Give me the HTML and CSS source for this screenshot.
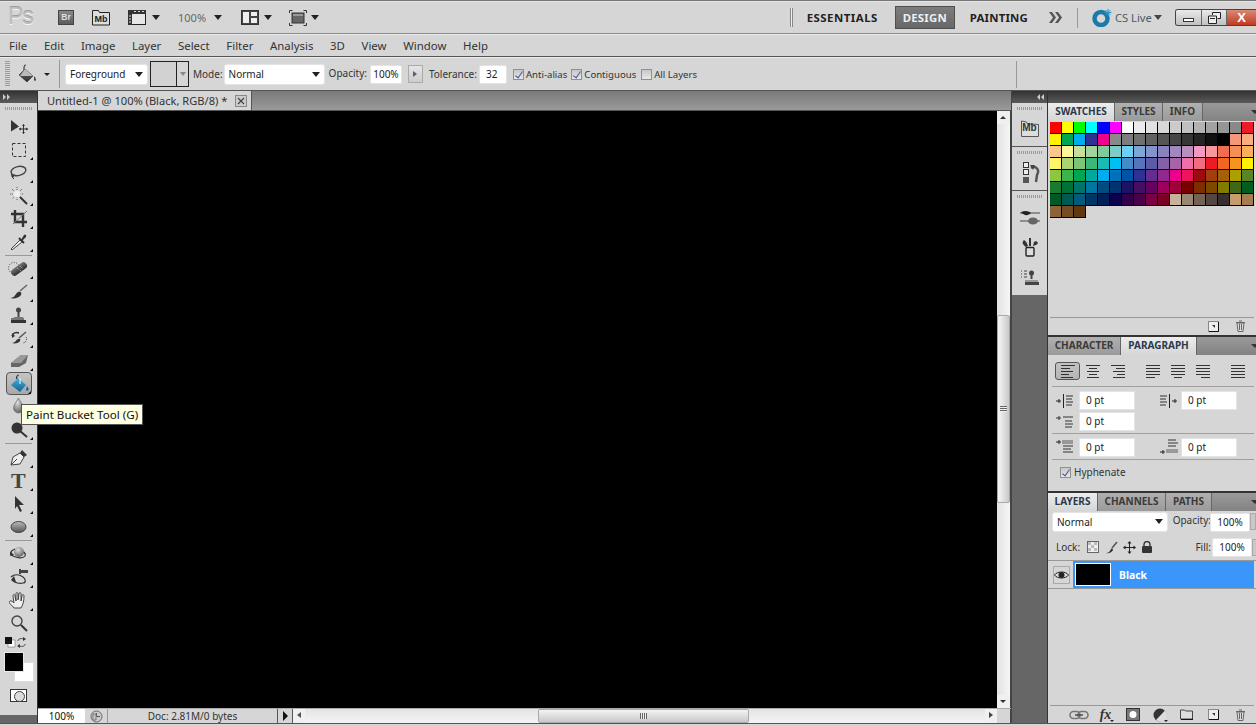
FILE: index.html
```html
<!DOCTYPE html>
<html lang="en">
<head>
<meta charset="utf-8">
<title>Photoshop CS5</title>
<link rel="stylesheet" href="styles.css">
</head>
<body>
<svg class="defs" width="0" height="0" aria-hidden="true">
  <defs>
    <linearGradient id="gm" x1="0" y1="0" x2="0" y2="1"><stop offset="0" stop-color="#777"/><stop offset="1" stop-color="#2c2c2c"/></linearGradient>
    <linearGradient id="gl" x1="0" y1="0" x2="0" y2="1"><stop offset="0" stop-color="#bbb"/><stop offset="1" stop-color="#555"/></linearGradient>
    <linearGradient id="gb" x1="0" y1="0" x2="0" y2="1"><stop offset="0" stop-color="#4ab0dd"/><stop offset="1" stop-color="#14608c"/></linearGradient>
    <radialGradient id="gs" cx=".4" cy=".3" r=".8"><stop offset="0" stop-color="#ddd"/><stop offset="1" stop-color="#555"/></radialGradient>
  </defs>
</svg>
<div class="app">
  <header class="appbar">
    <span class="ps-logo">Ps</span>
    <span class="br-box">Br</span>
    <span class="mb-box"><svg width="18" height="17" viewBox="0 0 18 17"><path d="M.5 16V1.500h6l1 2h10V16z" fill="#ddd" stroke="#222"/></svg><b>Mb</b></span>
    <svg class="ab-film" width="18" height="17" viewBox="0 0 18 17"><rect x=".5" y="1.500" width="17" height="14" fill="#e6e6e6" stroke="#222"/><rect x="0" y="1" width="18" height="4" fill="#333"/><rect x="0" y="5" width="4" height="11" fill="#333"/><path d="M1 7h2M1 10h2M1 13h2M6 2.500h2M10 2.500h2M14 2.500h2" stroke="#ddd"/></svg>
    <i class="tri ab-t1"></i>
    <span class="ab-zoom">100%</span>
    <i class="tri ab-t2"></i>
    <svg class="ab-arr" width="18" height="15" viewBox="0 0 18 15"><rect x=".5" y=".5" width="17" height="14" fill="#444" stroke="#333"/><rect x="2" y="2" width="6" height="11" fill="#eee"/><rect x="10" y="2" width="6" height="4" fill="#eee"/><rect x="10" y="8" width="6" height="5" fill="#eee"/></svg>
    <i class="tri ab-t3"></i>
    <svg class="ab-scr" width="18" height="16" viewBox="0 0 18 16"><path d="M.5 3V.500h3M14.500 .500h3V3M.5 13v2.500h3M14.500 15.500h3V13" fill="none" stroke="#333"/><rect x="3" y="3" width="12" height="10" fill="#666" stroke="#333"/><rect x="4" y="4" width="10" height="2" fill="#999"/></svg>
    <i class="tri ab-t4"></i>
    <span class="ab-spacer"></span>
    <span class="ab-dbl"></span>
    <span class="ws ws-e">ESSENTIALS</span>
    <span class="ws ws-on">DESIGN</span>
    <span class="ws ws-p">PAINTING</span>
    <svg class="ab-more" width="15" height="11" viewBox="0 0 15 11"><path d="M1 0h3l4 5.500-4 5.500H1l4-5.500zM7 0h3l4 5.500-4 5.500H7l4-5.500z" fill="#555"/></svg>
    <span class="ab-sep"></span>
    <svg class="ab-cs" width="20" height="19" viewBox="0 0 20 19"><circle cx="9" cy="10.500" r="6.500" fill="none" stroke="#1c7aa8" stroke-width="4.500"/><path d="M16 1v7M12.500 4.500h7M13.500 2l5 5M18.500 2l-5 5" stroke="#2a95c4" stroke-width="1"/></svg>
    <span class="cs-text">CS Live</span>
    <i class="tri tri-g cs-t"></i>
    <div class="winctl">
      <span class="wc wc-min"><i></i></span>
      <span class="wc wc-res"><svg width="13" height="12" viewBox="0 0 13 12"><path d="M4.500 3V.500h8v6H9.500M.5 4h8v7.500h-8z" fill="#eee" stroke="#222"/><path d="M2 6.500h5" stroke="#222"/></svg></span>
      <span class="wc wc-close">X</span>
    </div>
  </header>

  <nav class="menubar">
    <span>File</span><span>Edit</span><span>Image</span><span>Layer</span><span>Select</span><span>Filter</span><span>Analysis</span><span>3D</span><span>View</span><span>Window</span><span>Help</span>
  </nav>

  <div class="options">
    <span class="grip-v"></span>
    <svg class="op-bucket" width="20" height="20" viewBox="0 0 20 20"><path d="M9 1c-1.500 0-2 1.500-2 3v3" fill="none" stroke="#444" stroke-width="1.200"/><path d="M8 5l8 7-6 6-8-7z" fill="url(#gm)" stroke="#333" stroke-width=".6"/><path d="M8 5l8 7H3z" fill="#bbb"/><path d="M17 12c1.500 2 2 3 2 4s-2 1-2 0z" fill="#444"/></svg>
    <i class="tri op-t"></i>
    <span class="op-sep"></span>
    <span class="sel sel-fg">Foreground<i class="tri"></i></span>
    <span class="pattern"><span class="pat-swatch"></span><span class="pat-arrow"><i class="tri tri-s"></i></span></span>
    <label class="lbl lbl-mode">Mode:</label>
    <span class="sel sel-mode">Normal<i class="tri"></i></span>
    <label class="lbl lbl-op">Opacity:</label>
    <span class="field f-op">100%</span>
    <span class="stepper"><i class="tri-r"></i></span>
    <label class="lbl lbl-tol">Tolerance:</label>
    <span class="field f-tol">32</span>
    <span class="chk c-aa on"></span><span class="lbl lbl-c">Anti-alias</span>
    <span class="chk c-co on"></span><span class="lbl lbl-c">Contiguous</span>
    <span class="chk c-al"></span><span class="lbl lbl-c">All Layers</span>
    <span class="op-sep2"></span>
  </div>

  <main class="workspace">
    <aside class="tools">
      <div class="strip"><svg width="8" height="6" viewBox="0 0 8 6"><path d="M0 0l3 3-3 3zM4 0l3 3-3 3z" fill="#ccc"/></svg></div>
      <div class="grip-h tools-grip"></div>
      <div class="tgroup">
        <div class="tool"><svg width="24" height="20" viewBox="0 0 24 20"><path d="M4 3l8 6.500-8 5z" fill="#333"/><path d="M16.500 7.500v9M12 12h9" stroke="#333"/><path d="M16.500 7l-1.500 2h3zM16.500 17l-1.500-2h3zM12 12l2-1.500v3zM21 12l-2-1.500v3z" fill="#333"/></svg></div>
        <div class="tool corner"><svg width="24" height="20" viewBox="0 0 24 20"><rect x="5.500" y="3.500" width="13" height="13" fill="none" stroke="#333" stroke-dasharray="3 2"/></svg></div>
        <div class="tool corner"><svg width="24" height="20" viewBox="0 0 24 20"><ellipse cx="11.500" cy="8" rx="7.500" ry="4.500" transform="rotate(-12 11.500 8)" fill="none" stroke="#444" stroke-width="1.400"/><path d="M5 11c-1 2 0 3 1 3s1-2 0-2-1 3 1 4" fill="none" stroke="#333"/></svg></div>
        <div class="tool corner"><svg width="24" height="20" viewBox="0 0 24 20"><path d="M10 1v14M3 8h14M5 3l10 10M15 3L5 13" stroke="#555" stroke-dasharray="1 1"/><circle cx="10" cy="8" r="3.500" fill="#eee"/><path d="M13 11l7 7" stroke="#333" stroke-width="2"/></svg></div>
        <div class="tool corner"><svg width="24" height="20" viewBox="0 0 24 20"><path d="M8 1v12h12M4 5h12v13" fill="none" stroke="#333" stroke-width="2.400"/><path d="M6 15L20 2" stroke="#777"/></svg></div>
        <div class="tool corner"><svg width="24" height="20" viewBox="0 0 24 20"><path d="M5 18l-1-1 9-9 2 2z" fill="#eee" stroke="#444"/><path d="M12 6l5 5" stroke="#333" stroke-width="2"/><path d="M14 8l3-5c1-1.500 3 .5 2 2l-4 4z" fill="#333"/></svg></div>
      </div>
      <div class="tsep"></div>
      <div class="tgroup">
        <div class="tool corner"><svg width="24" height="20" viewBox="0 0 24 20"><circle cx="7" cy="9" r="5.500" fill="none" stroke="#444" stroke-dasharray="1 1.500"/><rect x="3" y="6.500" width="18" height="7" rx="3.500" transform="rotate(-36 12 10)" fill="url(#gm)"/><path d="M10 9l4 3M13 7l3 3" stroke="#bbb" stroke-dasharray="1 1"/></svg></div>
        <div class="tool corner"><svg width="24" height="20" viewBox="0 0 24 20"><path d="M3 16c5 0 5-4 8-6 3-1 4 1 3 3-2 3-7 4-11 3z" fill="#333"/><path d="M13 9l7-6" stroke="#666" stroke-width="1.500"/></svg></div>
        <div class="tool corner"><svg width="24" height="20" viewBox="0 0 24 20"><circle cx="11.500" cy="5" r="2.500" fill="#444"/><rect x="10.500" y="6" width="2" height="6" fill="#444"/><path d="M6 13l2-1h7l2 1v2H4v-2z" fill="#777"/><rect x="4" y="15" width="15" height="3" fill="#333"/></svg></div>
        <div class="tool corner"><svg width="24" height="20" viewBox="0 0 24 20"><path d="M5 15c3 0 4-3 6-4 2-1 3 1 2 2-1 2-5 3-8 2z" fill="#333"/><path d="M12 10l7-6" stroke="#555" stroke-width="1.500"/><path d="M5 8c1-3 4-4 7-3" fill="none" stroke="#333" stroke-width="1.500"/><path d="M5 5v5l3-2z" fill="#333"/><path d="M19 9a4 4 0 0 1-3 6" fill="none" stroke="#333" stroke-dasharray="1 1"/></svg></div>
        <div class="tool corner"><svg width="24" height="20" viewBox="0 0 24 20"><path d="M4 12L14 4h7l-2 8-7 4H4z" fill="#666"/><path d="M4 12h10l7-8H14z" fill="#999"/></svg></div>
        <div class="tool tool-on corner"><svg width="24" height="20" viewBox="0 0 24 20"><path d="M11 1c-2 0-2.500 2-2.500 4" fill="none" stroke="#333" stroke-width="1.200"/><path d="M10 4l8 7-6 7-9-7z" fill="url(#gb)"/><path d="M12 4v6" stroke="#fff"/><path d="M19 12c1 2 2 3 1.500 4s-2.500 1-2.500 0z" fill="#14608c"/></svg></div>
        <div class="tool"><svg width="24" height="20" viewBox="0 0 24 20"><path d="M11.500 1c2 4 5 7 5 10a5 5 0 0 1-10 0c0-3 3-6 5-10z" fill="url(#gs)" stroke="#666" stroke-width=".6"/></svg></div>
        <div class="tool corner"><svg width="24" height="20" viewBox="0 0 24 20"><circle cx="10" cy="8" r="5.500" fill="#333"/><path d="M13 11l7 6" stroke="#333" stroke-width="2"/></svg></div>
      </div>
      <div class="tsep tsep-b"></div>
      <div class="tgroup">
        <div class="tool corner"><svg width="24" height="20" viewBox="0 0 24 20"><path d="M4 17l2-8 7-4 4 4-4 7z" fill="#eee" stroke="#444"/><path d="M4 17l6-6" stroke="#444"/><path d="M13 5l2-3 5 5-3 2z" fill="#333"/></svg></div>
        <div class="tool corner"><span class="t-glyph">T</span></div>
        <div class="tool corner"><svg width="24" height="20" viewBox="0 0 24 20"><path d="M8 2l9 9h-5l3 6-2 1-3-6-2 3z" fill="#333"/></svg></div>
        <div class="tool corner"><svg width="24" height="20" viewBox="0 0 24 20"><ellipse cx="11.500" cy="10" rx="7.500" ry="5.500" fill="url(#gl)" stroke="#444"/></svg></div>
      </div>
      <div class="tsep tsep-b"></div>
      <div class="tgroup">
        <div class="tool corner"><svg width="24" height="20" viewBox="0 0 24 20"><circle cx="12" cy="7" r="5" fill="url(#gs)"/><path d="M8 4c-5 2-6 5-2 7 4 2 10 3 12 0 1-2 0-3-1-4" fill="none" stroke="#333" stroke-width="1.200"/><path d="M4 7l-1 4 4-1z" fill="#333"/></svg></div>
        <div class="tool corner"><svg width="24" height="20" viewBox="0 0 24 20"><path d="M4 9c3-3 8-3 12 0 3 2 3 6 0 6-3 1-8 0-11-3" fill="none" stroke="#333" stroke-width="1.200"/><path d="M7 8l-3 4 5 2z" fill="#333"/><rect x="14" y="2" width="7" height="3" fill="#444"/><rect x="12" y="1" width="2" height="5" fill="#444"/></svg></div>
        <div class="tool corner"><svg width="24" height="20" viewBox="0 0 24 20"><path d="M7 17c-2-3-6-5-4-7 1-1 3 1 4 2l-1-7c0-2 2-2 2 0l1 5V3c0-2 2-2 2 0l0 6 1-6c0-2 2-2 2 0l0 7 1-5c0-2 2-2 2 0 0 5-1 9-3 12z" fill="#eee" stroke="#333" stroke-width=".9"/></svg></div>
        <div class="tool tool-zoom"><svg width="24" height="20" viewBox="0 0 24 20"><circle cx="10" cy="8" r="5" fill="#d6d6d6" stroke="#444" stroke-width="1.400"/><path d="M14 12l6 6" stroke="#333" stroke-width="2"/></svg></div>
      </div>
      <div class="defaults">
        <svg width="11" height="11" viewBox="0 0 11 11"><rect x="3" y="3" width="7" height="7" fill="#fff" stroke="#555" stroke-width=".5"/><rect x="0" y="0" width="7" height="7" fill="#111"/></svg>
        <svg class="mini-swap" width="11" height="11" viewBox="0 0 11 11"><path d="M2 4c0-2 2-3 6-2M9 7c0 2-2 3-6 2" fill="none" stroke="#444"/><path d="M7 0l3 2-3 2zM4 7L1 9l3 2z" fill="#333"/></svg>
      </div>
      <div class="colors"><span class="col-bg"></span><span class="col-fg"></span></div>
      <div class="maskwrap"><span class="maskbtn"></span></div>
      <div class="tools-tail"></div>
    </aside>

    <section class="doc">
      <div class="doc-tabs">
        <div class="doc-tab"><span>Untitled-1 @ 100% (Black, RGB/8) *</span><svg class="doc-x" width="12" height="12" viewBox="0 0 12 12"><rect x=".5" y=".5" width="11" height="11" fill="#ccc" stroke="#888"/><path d="M3 3l6 6M9 3l-6 6" stroke="#444" stroke-width="1.200"/></svg></div>
      </div>
      <div class="doc-mid">
        <div class="canvas"></div>
        <div class="vscroll">
          <i class="sc-up"></i>
          <div class="vtrack"><div class="vthumb"><span></span></div></div>
          <i class="sc-down"></i>
        </div>
      </div>
      <div class="status">
        <span class="st-zoom">100%</span>
        <span class="st-ic"><svg width="13" height="13" viewBox="0 0 13 13"><circle cx="6.500" cy="6.500" r="5.500" fill="#ccc" stroke="#666"/><path d="M6.500 3v3.500H10" fill="none" stroke="#555"/><path d="M3 4h3v6H3z" fill="none" stroke="#777"/></svg></span>
        <span class="st-doc">Doc: 2.81M/0 bytes</span>
        <span class="st-go"><i class="tri-rb"></i></span>
        <div class="hscroll">
          <i class="sc-left"></i>
          <div class="htrack"><div class="hthumb"><span></span></div></div>
          <i class="sc-right"></i>
        </div>
        <span class="st-corner"></span>
      </div>
    </section>

    <aside class="dock">
      <div class="strip strip-dock"><svg width="8" height="6" viewBox="0 0 8 6"><path d="M3 0L0 3l3 3zM7 0L4 3l3 3z" fill="#ccc"/></svg></div>
      <div class="dgroup dg1">
        <div class="grip-h"></div>
        <svg class="dock-ic" width="18" height="18" viewBox="0 0 18 18"><path d="M.5 16.500V1l5 1 1 2 11 .5v12z" fill="#ddd" stroke="#555"/></svg>
        <b class="dock-mb">Mb</b>
      </div>
      <div class="dgroup dg2">
        <div class="grip-h"></div>
        <svg class="dock-ic2" width="18" height="24" viewBox="0 0 18 24"><rect x=".5" y=".5" width="5" height="5" fill="#eee" stroke="#333"/><rect x=".5" y="7.500" width="5" height="5" fill="#eee" stroke="#333"/><rect width="6" height="6" y="15" fill="#555"/><path d="M8 6c5-3 9 2 6 7l-1 7" fill="none" stroke="#555" stroke-width="2.500"/><path d="M7 3l5 0-2 5z" fill="#444"/></svg>
      </div>
      <div class="dgroup dg3">
        <div class="grip-h"></div>
        <svg class="dock-ic3" width="20" height="15" viewBox="0 0 20 15"><path d="M0 3h20M0 11h20" stroke="#777" stroke-width="1.500"/><path d="M1 2c4-2 8-1 10 1-3 3-7 3-10-1z" fill="#222"/><ellipse cx="13" cy="11" rx="5" ry="3.500" fill="#666"/></svg>
        <svg class="dock-ic3" width="17" height="19" viewBox="0 0 17 19"><rect x="5" y="9.500" width="8" height="8.500" rx="1" fill="#ddd" stroke="#222" stroke-width="1.400"/><path d="M3 2c-2 2-2 4 2 7l2-1C6 5 5 3 3 2zM8 0v8h2V0zM12 8c2-1 4-1 5-3-1-2-3-2-4-1z" fill="#333"/></svg>
        <svg class="dock-ic3" width="19" height="17" viewBox="0 0 19 17"><path d="M1 1h1M1 4h1M1 7h1M4 1h3M4 4h3M4 7h3" stroke="#444"/><circle cx="11.500" cy="3" r="2.500" fill="#444"/><rect x="10.500" y="4" width="2" height="5" fill="#444"/><path d="M5 10h13v2H5z" fill="#999"/><rect x="5" y="12" width="14" height="3" fill="#444"/></svg>
      </div>
      <div class="dock-fill"></div>
    </aside>

    <aside class="panels">
      <div class="strip"></div>
      <section class="panel p-swatches">
        <div class="tabs"><span class="tab on t1">SWATCHES</span><span class="tab t2">STYLES</span><span class="tab t3">INFO</span><i class="tab-menu"></i></div>
        <div class="swatches">
          <span style="background:#ff0000"></span><span style="background:#ffff00"></span><span style="background:#00ff00"></span><span style="background:#00ffff"></span><span style="background:#0000ff"></span><span style="background:#ff00ff"></span><span style="background:#ffffff"></span><span style="background:#ebebeb"></span><span style="background:#e1e1e1"></span><span style="background:#d7d7d7"></span><span style="background:#cbcbcb"></span><span style="background:#c0c0c0"></span><span style="background:#b2b2b2"></span><span style="background:#a1a1a1"></span><span style="background:#959595"></span><span style="background:#898989"></span><span style="background:#ed1c24"></span>
          <span style="background:#fff200"></span><span style="background:#00a651"></span><span style="background:#00aeef"></span><span style="background:#2e3192"></span><span style="background:#ec008c"></span><span style="background:#898989"></span><span style="background:#7d7d7d"></span><span style="background:#707070"></span><span style="background:#626262"></span><span style="background:#555555"></span><span style="background:#464646"></span><span style="background:#363636"></span><span style="background:#252525"></span><span style="background:#111111"></span><span style="background:#000000"></span><span style="background:#f7977a"></span><span style="background:#f9ad81"></span>
          <span style="background:#fdc68a"></span><span style="background:#fff79a"></span><span style="background:#c4df9b"></span><span style="background:#a2d39c"></span><span style="background:#82ca9d"></span><span style="background:#7bcdc8"></span><span style="background:#6ecff6"></span><span style="background:#7ea7d8"></span><span style="background:#8493ca"></span><span style="background:#8882be"></span><span style="background:#a187be"></span><span style="background:#bc8dbf"></span><span style="background:#f49ac2"></span><span style="background:#f6989d"></span><span style="background:#f26c4f"></span><span style="background:#f68e55"></span><span style="background:#fbaf5c"></span>
          <span style="background:#fff467"></span><span style="background:#acd372"></span><span style="background:#7cc576"></span><span style="background:#3bb878"></span><span style="background:#1abbb4"></span><span style="background:#00bff3"></span><span style="background:#438cca"></span><span style="background:#5574b9"></span><span style="background:#5c5ba8"></span><span style="background:#855fa8"></span><span style="background:#a763a8"></span><span style="background:#ee6fa9"></span><span style="background:#f26d7d"></span><span style="background:#ed1c24"></span><span style="background:#f26522"></span><span style="background:#f7941d"></span><span style="background:#fff200"></span>
          <span style="background:#8dc63f"></span><span style="background:#39b54a"></span><span style="background:#00a651"></span><span style="background:#00a99d"></span><span style="background:#00aeef"></span><span style="background:#0072bc"></span><span style="background:#0054a6"></span><span style="background:#2e3192"></span><span style="background:#662d91"></span><span style="background:#92278f"></span><span style="background:#ec008c"></span><span style="background:#ed145b"></span><span style="background:#9e0b0f"></span><span style="background:#a0410d"></span><span style="background:#a36209"></span><span style="background:#aba000"></span><span style="background:#598527"></span>
          <span style="background:#197b30"></span><span style="background:#007236"></span><span style="background:#00746b"></span><span style="background:#0076a3"></span><span style="background:#004b80"></span><span style="background:#003471"></span><span style="background:#1b1464"></span><span style="background:#440e62"></span><span style="background:#630460"></span><span style="background:#9e005d"></span><span style="background:#9e0039"></span><span style="background:#790000"></span><span style="background:#7b2e00"></span><span style="background:#7d4900"></span><span style="background:#827b00"></span><span style="background:#406618"></span><span style="background:#005e20"></span>
          <span style="background:#005826"></span><span style="background:#005952"></span><span style="background:#005b7f"></span><span style="background:#003663"></span><span style="background:#002157"></span><span style="background:#0d004c"></span><span style="background:#32004b"></span><span style="background:#4b0049"></span><span style="background:#7b0046"></span><span style="background:#7a0026"></span><span style="background:#c7b299"></span><span style="background:#998675"></span><span style="background:#736357"></span><span style="background:#534741"></span><span style="background:#362f2d"></span><span style="background:#c69c6d"></span><span style="background:#a67c52"></span>
          <span style="background:#8c6239"></span><span style="background:#754c24"></span><span style="background:#603913"></span>
        </div>
        <div class="p-footer">
          <span class="fic"><svg width="11" height="11" viewBox="0 0 11 11"><rect x=".5" y=".5" width="10" height="10" fill="#eee" stroke="#888"/><path d="M10.500 1v9.500H1" fill="none" stroke="#111"/><path d="M4 4h3v3z" fill="#333"/></svg></span>
          <span class="fic"><svg width="11" height="12" viewBox="0 0 11 12"><path d="M2 3h7l-1 8.500H3z" fill="#ddd" stroke="#666"/><path d="M1 2.500h9M4 1h3M4.500 4v6M6.500 4v6" stroke="#666"/></svg></span>
        </div>
      </section>

      <section class="panel p-para">
        <div class="tabs"><span class="tab t4">CHARACTER</span><span class="tab on t5">PARAGRAPH</span><i class="tab-menu"></i></div>
        <div class="align-row">
          <span class="al al-on"><i class="lines l-left"></i></span><span class="al"><i class="lines l-center"></i></span><span class="al al-gap"><i class="lines l-right"></i></span>
          <span class="al"><i class="lines l-just"></i></span><span class="al"><i class="lines l-just2"></i></span><span class="al al-gap"><i class="lines l-just3"></i></span>
          <span class="al"><i class="lines l-full"></i></span>
        </div>
        <div class="hr hr-a"></div>
        <div class="para-row pr1">
          <span class="pi"><svg width="18" height="14" viewBox="0 0 18 14"><path d="M0 7h5M3 5v4M7.500 0v14" stroke="#222"/><path d="M10 2h7M10 5h6M10 8h7M10 11h6" stroke="#333"/></svg></span><span class="pf">0 pt</span>
          <span class="pi pi2"><svg width="18" height="14" viewBox="0 0 18 14"><path d="M0 2h7M0 5h6M0 8h7M0 11h6" stroke="#333"/><path d="M9.500 0v14M12 7h5M15 5v4" stroke="#222"/></svg></span><span class="pf">0 pt</span>
        </div>
        <div class="para-row pr2">
          <span class="pi"><svg width="18" height="14" viewBox="0 0 18 14"><path d="M0 3h5M3 1v4M7 2h10M9 6h7M9 9h8M9 12h7" stroke="#333"/></svg></span><span class="pf">0 pt</span>
        </div>
        <div class="hr hr-b"></div>
        <div class="para-row pr3">
          <span class="pi"><svg width="18" height="15" viewBox="0 0 18 15"><path d="M0 2h5M3 0v4" stroke="#222"/><rect x="6" y="0" width="11" height="4" fill="#999"/><path d="M7 6h10M7 9h8M7 12h10" stroke="#333"/></svg></span><span class="pf">0 pt</span>
          <span class="pi pi2"><svg width="18" height="17" viewBox="0 0 18 17"><path d="M8 1h8M8 4h10M8 7h8" stroke="#333"/><rect x="6" y="10" width="12" height="4" fill="#999"/><path d="M0 13h5M3 11v4" stroke="#222"/></svg></span><span class="pf">0 pt</span>
        </div>
        <div class="hr hr-c"></div>
        <div class="hyph"><span class="chk on"></span><span class="lbl">Hyphenate</span></div>
      </section>

      <section class="panel p-layers">
        <div class="tabs"><span class="tab on t6">LAYERS</span><span class="tab t7">CHANNELS</span><span class="tab t8">PATHS</span><i class="tab-menu"></i></div>
        <div class="ly-row1">
          <span class="sel sel-blend">Normal<i class="tri"></i></span>
          <span class="lbl ly-op">Opacity:</span><span class="field f-ly">100%</span><span class="ly-step"></span>
        </div>
        <div class="ly-row2">
          <span class="lbl ly-lock">Lock:</span>
          <span class="lk"><svg width="12" height="12" viewBox="0 0 12 12"><rect x=".5" y=".5" width="11" height="11" fill="#eee" stroke="#666"/><path d="M1 1h3v3H1zM7 1h3v3H7zM4 4h3v3H4zM1 7h3v3H1zM7 7h3v3H7z" fill="#bbb"/></svg></span>
          <span class="lk"><svg width="13" height="13" viewBox="0 0 13 13"><path d="M1 12c3 0 4-2 5-4 1-1 2 0 2 1-1 2-4 4-7 3z" fill="#333"/><path d="M7 7l5-6" stroke="#555" stroke-width="1.500"/></svg></span>
          <span class="lk"><svg width="13" height="13" viewBox="0 0 13 13"><path d="M6.500 1v11M1 6.500h11" stroke="#222"/><path d="M6.500 0l-2 2.500h4zM6.500 13l-2-2.500h4zM0 6.500l2.500-2v4zM13 6.500l-2.500-2v4z" fill="#222"/></svg></span>
          <span class="lk"><svg width="10" height="12" viewBox="0 0 10 12"><path d="M2 5V3.500a3 3 0 0 1 6 0V5" fill="none" stroke="#333" stroke-width="1.400"/><rect x="0" y="5" width="10" height="7" rx="1" fill="#333"/></svg></span>
          <span class="lbl ly-fill">Fill:</span><span class="field f-ly">100%</span><span class="ly-step"></span>
        </div>
        <div class="hr hr-ly"></div>
        <div class="layer">
          <span class="eye"><svg width="15" height="10" viewBox="0 0 15 10"><path d="M.5 5C3 1 12 1 14.500 5 12 9 3 9 .5 5z" fill="#ddd" stroke="#222"/><circle cx="7.500" cy="5" r="3" fill="#222"/></svg></span>
          <div class="layer-main"><span class="thumb"></span><span class="layer-name">Black</span></div>
        </div>
        <div class="ly-empty"></div>
        <div class="p-footer ly-footer">
          <span class="fic"><svg width="20" height="10" viewBox="0 0 20 10"><rect x="1" y="1.500" width="10" height="7" rx="3.500" fill="none" stroke="#777" stroke-width="1.600"/><rect x="9" y="1.500" width="10" height="7" rx="3.500" fill="none" stroke="#777" stroke-width="1.600"/><path d="M6 5h8" stroke="#444" stroke-width="1.400"/></svg></span>
          <span class="fic fx">fx<i class="tri tri-xs"></i></span>
          <span class="fic"><svg width="14" height="13" viewBox="0 0 14 13"><rect x=".5" y=".5" width="13" height="12" fill="#777" stroke="#333"/><circle cx="7" cy="6.500" r="3.500" fill="#fff"/></svg></span>
          <span class="fic"><svg width="14" height="14" viewBox="0 0 14 14"><circle cx="7" cy="7" r="6.500" fill="#333"/><path d="M12 2.500A6.500 6.500 0 0 1 3 12z" fill="#ddd"/></svg><i class="tri tri-xs"></i></span>
          <span class="fic"><svg width="13" height="11" viewBox="0 0 13 11"><path d="M.5 10V1h4l1 1h7v8z" fill="#ddd"/><path d="M.5 10V1h4l1 1h7v8z" fill="none" stroke="#444"/><path d="M1 10.500h12" stroke="#111"/></svg></span>
          <span class="fic"><svg width="11" height="11" viewBox="0 0 11 11"><rect x=".5" y=".5" width="10" height="10" fill="#eee" stroke="#888"/><path d="M10.500 1v9.500H1" fill="none" stroke="#111"/><path d="M4 4h3v3z" fill="#333"/></svg></span>
          <span class="fic"><svg width="11" height="12" viewBox="0 0 11 12"><path d="M2 3h7l-1 8.500H3z" fill="#ddd" stroke="#666"/><path d="M1 2.500h9M4 1h3M4.500 4v6M6.500 4v6" stroke="#666"/></svg></span>
        </div>
      </section>
    </aside>
    <div class="tooltip">Paint Bucket Tool (G)</div>
  </main>
  <div class="bottom-line"></div>
</div>
</body>
</html>
```
FILE: styles.css
```css
*{box-sizing:border-box}
html,body{margin:0;padding:0;height:100%;overflow:hidden}
body{background:#d6d6d6;font:10px "Noto Sans","Open Sans","DejaVu Sans",sans-serif;color:#222}
.defs{position:absolute}
.app{width:1256px;height:725px;display:flex;flex-direction:column}
i{display:block;font-style:normal}
svg{display:block;flex:none}

.tri{width:0;height:0;border-left:4px solid transparent;border-right:4px solid transparent;border-top:5px solid #222;flex:none}
.tri-g{border-top-color:#444}
.tri-s{border-left-width:3px;border-right-width:3px;border-top:4px solid #888}
.tri-xs{border-left-width:2px;border-right-width:2px;border-top:2px solid #222}

/* app bar */
.appbar{height:34px;flex:none;display:flex;align-items:center;padding-top:1px;border-top:1px solid #777;border-bottom:1px solid #8a8a8a;padding-left:8px;box-shadow:inset 0 1px 0 #e6e6e6}
.ps-logo{font:400 23px/1 "Liberation Sans",sans-serif;color:#bdbdbd;text-shadow:0 1px 0 #f6f6f6,0 -1px 0 #9e9e9e;width:24px;margin-top:-2px;letter-spacing:-1px}
.br-box{width:16px;height:15px;margin-left:26px;background:linear-gradient(#888,#5c5c5c);color:#ddd;font:700 8.5px/13px "Liberation Sans",sans-serif;text-align:center;border:1px solid #444}
.mb-box{width:18px;height:17px;margin-left:18px;display:grid;place-items:center}
.mb-box>*{grid-area:1/1}
.mb-box b{font:700 9px/1 "Liberation Sans",sans-serif;color:#222;padding-top:3px}
.ab-film{margin-left:18px}
.ab-t1{margin-left:6px}
.ab-zoom{margin-left:18px;color:#666;font-size:11px;width:32px}
.ab-t2{margin-left:4px}
.ab-arr{margin-left:19px}
.ab-t3{margin-left:5px}
.ab-scr{margin-left:17px}
.ab-t4{margin-left:4px}
.ab-spacer{flex:1}
.ab-dbl{width:3px;height:19px;border-left:1px solid #888;border-right:1px solid #888;background:#f0f0f0}
.ws{font:700 11.4px/1 "Noto Sans",sans-serif;color:#222;letter-spacing:.2px}
.ws-e{margin-left:14px;letter-spacing:.5px}
.ws-on{width:60px;height:23px;margin-left:17px;line-height:21px;text-align:center;background:linear-gradient(#7c7c7c,#686868);border:1px solid #4f4f4f;color:#eaf0f6}
.ws-p{margin-left:15px}
.ab-more{margin-left:20px}
.ab-sep{width:1px;height:20px;background:#999;margin-left:14px}
.ab-cs{margin-left:14px}
.cs-text{margin-left:3px;color:#4a5a66;font-size:11.2px;width:33px;white-space:nowrap}
.cs-t{margin-left:6px}
.winctl{display:flex;height:17px;margin-left:13px;border:1px solid #444;border-right:0;border-radius:3px 0 0 3px;overflow:hidden;width:81px;flex:none}
.wc{display:flex;align-items:center;justify-content:center;background:linear-gradient(#eaeaea,#c0c0c0);border-right:1px solid #666}
.wc-min{width:26px}
.wc-min i{width:11px;height:4px;margin-top:5px;background:#fff;border:1px solid #333}
.wc-res{width:25px}
.wc-close{flex:1;border:0;background:linear-gradient(#d98a76,#c13a22);color:#fff;font:700 13px/1 "Liberation Sans",sans-serif}

/* menu */
.menubar{height:23px;flex:none;display:flex;align-items:center;gap:16.7px;padding:0 0 1px 9px;font-size:11.4px;color:#333;border-top:1px solid #ececec;border-bottom:1px solid #555}

/* options */
.options{height:34px;flex:none;display:flex;align-items:center;border-top:1px solid #ececec;border-bottom:1px solid #555;padding-left:5px;position:relative}
.grip-v{width:5px;height:26px;background:repeating-linear-gradient(#9a9a9a 0 1px,transparent 1px 2px)}
.op-bucket{margin-left:7px}
.op-t{margin-left:7px;border-left-width:3px;border-right-width:3px;border-top-width:3px}
.op-sep{width:1px;height:28px;background:#999;margin-left:9px}
.sel{display:flex;align-items:center;justify-content:space-between;background:#fff;border-radius:2px;height:19px;padding:0 4px;color:#222;font-size:10px;box-shadow:0 0 0 1px #e4e4e4}
.sel-fg{width:81px;margin-left:6px}
.pattern{display:flex;width:39px;height:26px;margin-left:3px;border:1px solid #222}
.pat-swatch{width:26px;background:#d2d2d2;border-right:1px solid #222}
.pat-arrow{flex:1;display:flex;align-items:center;justify-content:center}
.lbl{color:#333;font-size:10px;white-space:nowrap}
.lbl-c{font-size:9.6px}
.lbl-mode{margin-left:4px}
.sel-mode{width:99px;margin-left:2px}
.lbl-op{margin-left:5px;margin-top:-2px}
.field{background:#fff;height:17px;line-height:17px;box-shadow:0 0 0 1px #e4e4e4;color:#222;font-size:10px;border-radius:1px}
.f-op{width:30px;margin-left:4px;text-align:center}
.stepper{width:15px;height:18px;margin-left:7px;background:linear-gradient(#e4e4e4,#cdcdcd);border:1px solid #aaa;display:flex;align-items:center;justify-content:center}
.tri-r{width:0;height:0;border-top:3px solid transparent;border-bottom:3px solid transparent;border-left:4px solid #55617a}
.lbl-tol{margin-left:6px}
.f-tol{width:26px;margin-left:3px;padding-left:6px}
.chk{width:11px;height:11px;border:1px solid #8f8f8f;background:linear-gradient(#c8c8c8,#e8e8e8);flex:none;margin-right:2px;position:relative}
.chk.on::after{content:"";position:absolute;left:3px;top:0;width:3px;height:7px;border-right:1.500px solid #4a5a9a;border-bottom:1.500px solid #4a5a9a;transform:rotate(35deg)}
.c-aa{margin-left:7px}
.c-co{margin-left:4px}
.c-al{margin-left:5px}
.op-sep2{position:absolute;left:1016px;top:3px;width:1px;height:27px;background:#999}

/* workspace */
.workspace{flex:1;min-height:0;display:grid;grid-template-columns:38px 973px 37px 208px;position:relative;overflow:hidden}
.strip{height:12px;background:linear-gradient(#333,#5a5a5a);display:flex;align-items:center;padding-left:3px;flex:none}

/* tools */
.tools{border-right:1px solid #333;display:flex;flex-direction:column;background:#d6d6d6}
.grip-h{height:3px;margin:4px 5px 0;background:repeating-linear-gradient(90deg,#9a9a9a 0 1px,transparent 1px 2px)}
.tools-grip{margin:4px 5px 5px;flex:none}
.tgroup{display:flex;flex-direction:column;flex:none}
.tool{height:23px;display:flex;align-items:center;padding-left:7px;position:relative}
.tool-zoom{margin-top:-1px}
.corner::after{content:"";position:absolute;right:4px;bottom:1px;border-left:3px solid transparent;border-bottom:3px solid #111}
.tool-on{margin:0 5px 0 6px;padding-left:1px;border:1px solid #555;border-radius:4px;background:linear-gradient(#c4c4c4,#a8a8a8)}
.tool-on::after{right:0;bottom:0}
.tsep{height:1px;margin:2px 5px 1px;background:#999;flex:none}
.tsep-b{margin:2px 5px 2px}
.t-glyph{font:700 22px/1 "Liberation Serif",serif;color:#444;margin-left:4px}
.defaults{height:11px;margin:3px 4px 0 0;padding:0 5px;display:flex;justify-content:space-between;flex:none}
.mini-swap{margin-right:2px}
.colors{height:30px;margin:4px 0 0 4px;display:grid;grid-template-columns:10px 20px;grid-template-rows:10px 20px;flex:none}
.col-bg{grid-area:2/2;background:#fff;border:1px solid #ddd}
.col-fg{grid-area:1/1/3/3;width:20px;height:20px;background:#000;border:1px solid #e8e8e8;z-index:1}
.maskwrap{height:13px;margin:7px 0 0 10px;flex:none}
.maskbtn{display:block;width:17px;height:13px;background:#fff;border:1px solid #333;position:relative}
.maskbtn::after{content:"";position:absolute;left:3px;top:1px;width:9px;height:9px;border-radius:50%;background:#ddd;border:1px solid #444}
.tools-tail{margin-top:auto;height:8px;background:#666;flex:none}

/* doc */
.doc{display:flex;flex-direction:column;min-width:0}
.doc-tabs{height:20px;flex:none;background:linear-gradient(#7a7a7a,#9a9a9a);border-bottom:1px solid #555}
.doc-tab{width:214px;height:19px;background:#d6d6d6;display:flex;align-items:center;padding-left:9px;gap:7px;font-size:11.1px;color:#333;white-space:nowrap;border-right:1px solid #555}
.doc-x{margin-left:auto;margin-right:4px}
.doc-mid{flex:1;display:flex;min-height:0}
.canvas{flex:1;background:#000}
.vscroll{width:14px;display:flex;flex-direction:column;background:#f0f0f0;flex:none;border-right:1px solid #444}
.sc-up,.sc-down{height:13px;flex:none;position:relative}
.sc-up::after,.sc-down::after{content:"";position:absolute;left:3px;top:5px;border-left:3px solid transparent;border-right:3px solid transparent}
.sc-up::after{border-bottom:3px solid #333}
.sc-down::after{border-top:3px solid #333}
.vtrack{flex:1;display:flex;flex-direction:column;padding-top:191px;background:linear-gradient(90deg,#e2e2e2,#f6f6f6)}
.vthumb{height:188px;background:linear-gradient(90deg,#f8f8f8,#c8c8c8);border:1px solid #aaa;border-radius:2px;display:flex;align-items:center;justify-content:center}
.vthumb span{width:7px;height:6px;background:repeating-linear-gradient(#666 0 1px,#eee 1px 2px)}
.status{height:15px;flex:none;display:flex;background:#d6d6d6;border-top:1px solid #aaa;position:relative}
.st-zoom{width:47px;background:#fff;text-align:center;line-height:15px;color:#111;font-size:10px}
.st-ic{width:23px;display:flex;align-items:center;justify-content:center;border-right:1px solid #999}
.st-doc{width:170px;text-align:center;line-height:14px;color:#333;font-size:10px;border-right:1px solid #555}
.st-go{width:15px;display:flex;align-items:center;justify-content:center;border-right:1px solid #555}
.tri-rb{width:0;height:0;border-top:5px solid transparent;border-bottom:5px solid transparent;border-left:5px solid #111}
.hscroll{flex:1;display:flex;background:#f0f0f0}
.sc-left,.sc-right{width:12px;position:relative;flex:none}
.sc-left::after{content:"";position:absolute;left:4px;top:3px;border-top:3px solid transparent;border-bottom:3px solid transparent;border-right:4px solid #555}
.sc-right::after{content:"";position:absolute;left:4px;top:3px;border-top:3px solid transparent;border-bottom:3px solid transparent;border-left:4px solid #444}
.htrack{flex:1;padding-left:233px;background:linear-gradient(#e4e4e4,#f4f4f4)}
.hthumb{width:211px;height:100%;background:linear-gradient(#f4f4f4,#c8c8c8);border:1px solid #aaa;border-radius:2px;display:flex;align-items:center;justify-content:center}
.hthumb span{width:7px;height:6px;background:repeating-linear-gradient(90deg,#666 0 1px,#eee 1px 2px)}
.st-corner{width:14px;background:#d6d6d6;border-right:1px solid #444;flex:none}

/* dock */
.dock{display:flex;flex-direction:column;border-left:1px solid #444;border-right:1px solid #333;background:#666}
.strip-dock{padding-left:25px}
.dgroup{background:#d6d6d6;border-bottom:1px solid #555;display:flex;flex-direction:column;align-items:center;flex:none;position:relative}
.dgroup .grip-h{width:26px;align-self:center}
.dg1{height:44px}
.dg2{height:44px}
.dg3{height:104px;border-bottom:0}
.dock-ic{margin-top:10px}
.dock-mb{position:absolute;top:20px;left:0;width:100%;text-align:center;font:700 10px/1 "Liberation Sans",sans-serif;color:#333}
.dock-ic2{margin-top:8px;margin-left:4px}
.dock-ic3{margin-top:13px}
.dock-ic3:first-of-type{margin-top:12px}
.dock-fill{flex:1}

/* panels */
.panels{display:flex;flex-direction:column;min-width:0;background:#d6d6d6}
.panel{display:flex;flex-direction:column;flex:none;overflow:hidden}
.tabs{height:18px;flex:none;display:flex;background:linear-gradient(#9a9a9a,#828282);position:relative}
.tab{display:block;text-align:center;font:700 10px/17px "Noto Sans",sans-serif;color:#3a3a3a;background:linear-gradient(#b0b0b0,#9a9a9a);border-right:1px solid #666}
.tab.on{background:linear-gradient(#ececec,#d6d6d6);color:#2a3a4a}
.t1{width:67px}
.t2{width:48px}
.t3{width:40px}
.t4{width:73px}
.t5{width:76px}
.t6{width:50px}
.t7{width:68px}
.t8{width:46px}
.tab-menu{margin-left:auto;margin-top:7px;margin-right:-3px;width:0;height:0;border-left:4px solid transparent;border-right:4px solid transparent;border-top:4px solid #333}
.p-swatches{height:234px;border-bottom:2px solid #333}
.swatches{flex:none;height:195px;margin:1px 0 0 2px;display:grid;grid-template-columns:repeat(17,12px);grid-auto-rows:12px;align-content:start}
.swatches span{border-right:1px solid #000;border-bottom:1px solid #000}
.p-footer{height:17px;margin:0 2px;border-top:1px solid #999;display:flex;justify-content:flex-end;align-items:center;flex:none}
.fic{width:27px;display:flex;align-items:center;justify-content:center;position:relative}
.fic .tri-xs{position:absolute;right:5px;bottom:0}

.p-para{height:156px;border-bottom:2px solid #333}
.align-row{display:flex;margin:7px 0 0 7px;height:18px;flex:none}
.al{width:25px;height:18px;display:flex;align-items:center;justify-content:center;border:1px solid transparent;flex:none}
.al-on{border-color:#555;border-radius:3px;background:linear-gradient(#c4c4c4,#b4b4b4)}
.al-gap{margin-right:10px}
.lines{width:14px;height:13px;background-repeat:no-repeat;
  background-image:linear-gradient(#333,#333),linear-gradient(#333,#333),linear-gradient(#333,#333),linear-gradient(#333,#333),linear-gradient(#333,#333);
  background-position:0 0,0 3px,0 6px,0 9px,0 12px}
.l-left{background-size:14px 1px,9px 1px,12px 1px,8px 1px,12px 1px}
.l-center{background-size:14px 1px,8px 1px,12px 1px,8px 1px,12px 1px;background-position:0 0,3px 3px,1px 6px,3px 9px,1px 12px}
.l-right{background-size:14px 1px,9px 1px,12px 1px,8px 1px,12px 1px;background-position:0 0,5px 3px,2px 6px,6px 9px,2px 12px}
.l-just{background-size:14px 1px,14px 1px,14px 1px,14px 1px,9px 1px}
.l-just2{background-size:14px 1px,14px 1px,14px 1px,14px 1px,8px 1px;background-position:0 0,0 3px,0 6px,0 9px,3px 12px}
.l-just3{background-size:14px 1px,14px 1px,14px 1px,14px 1px,9px 1px;background-position:0 0,0 3px,0 6px,0 9px,5px 12px}
.l-full{background-size:14px 1px,14px 1px,14px 1px,14px 1px,14px 1px}
.hr{height:1px;background:#a0a0a0;margin:0 2px 0 4px;flex:none}
.hr-a{margin-top:6px}
.para-row{display:flex;align-items:center;height:17px;flex:none}
.pr1{margin-top:5px}
.pr2{margin-top:4px}
.pr3{margin-top:5px}
.hr-b{margin-top:3px}
.hr-c{margin-top:3px}
.pi{width:32px;padding-left:8px;flex:none}
.pi2{margin-left:16px;padding-left:10px}
.pf{width:54px;height:17px;line-height:17px;padding-left:6px;background:#fff;box-shadow:0 0 0 1px #e4e4e4;font-size:10px;color:#222;flex:none}
.hyph{display:flex;align-items:center;gap:1px;margin:5px 0 0 12px;flex:none}

.p-layers{flex:1;min-height:0}
.ly-row1{display:flex;align-items:center;height:19px;margin:1px 0 0 5px;flex:none}
.sel-blend{width:115px;height:18px}
.ly-op{margin-left:4px;margin-top:-3px;width:41px;text-align:right}
.f-ly{width:38px;text-align:center;flex:none;height:17px;margin-top:1px}
.ly-step{width:6px;height:17px;margin-left:1px;background:#c8c8c8;flex:none;border:1px solid #aaa}
.ly-row2{display:flex;align-items:center;height:18px;margin:7px -2px 0 8px;flex:none}
.ly-lock{width:28px}
.lk{width:18px;display:flex;justify-content:center;flex:none}
.ly-fill{margin-left:auto;margin-right:2px}
.hr-ly{margin:4px 0 0;background:#999}
.layer{display:flex;height:28px;flex:none;border-bottom:1px solid #999}
.eye{width:25px;display:flex;align-items:center;justify-content:center;padding-left:1px;flex:none}
.eye svg{box-sizing:content-box;padding:3px 0;border:1px solid #aaa}
.layer-main{flex:1;background:#3a96fb;display:flex;align-items:center;padding-left:2px;margin-right:2px}
.thumb{width:36px;height:23px;background:#000;border:1px solid #fff;flex:none}
.layer-name{margin-left:8px;color:#fff;font-weight:700;font-size:10.4px}
.ly-empty{flex:1}
.ly-footer{height:18px;flex:none}
.fx{font:italic 700 14px/1 "Liberation Serif",serif;color:#333}

.tooltip{position:absolute;left:21px;top:313px;height:21px;line-height:19px;padding:0 4px;background:#ffffe1;border:1px solid #555;font-size:11.6px;color:#111;white-space:nowrap}
.bottom-line{height:1px;background:#555;flex:none;margin-bottom:1px}
```
